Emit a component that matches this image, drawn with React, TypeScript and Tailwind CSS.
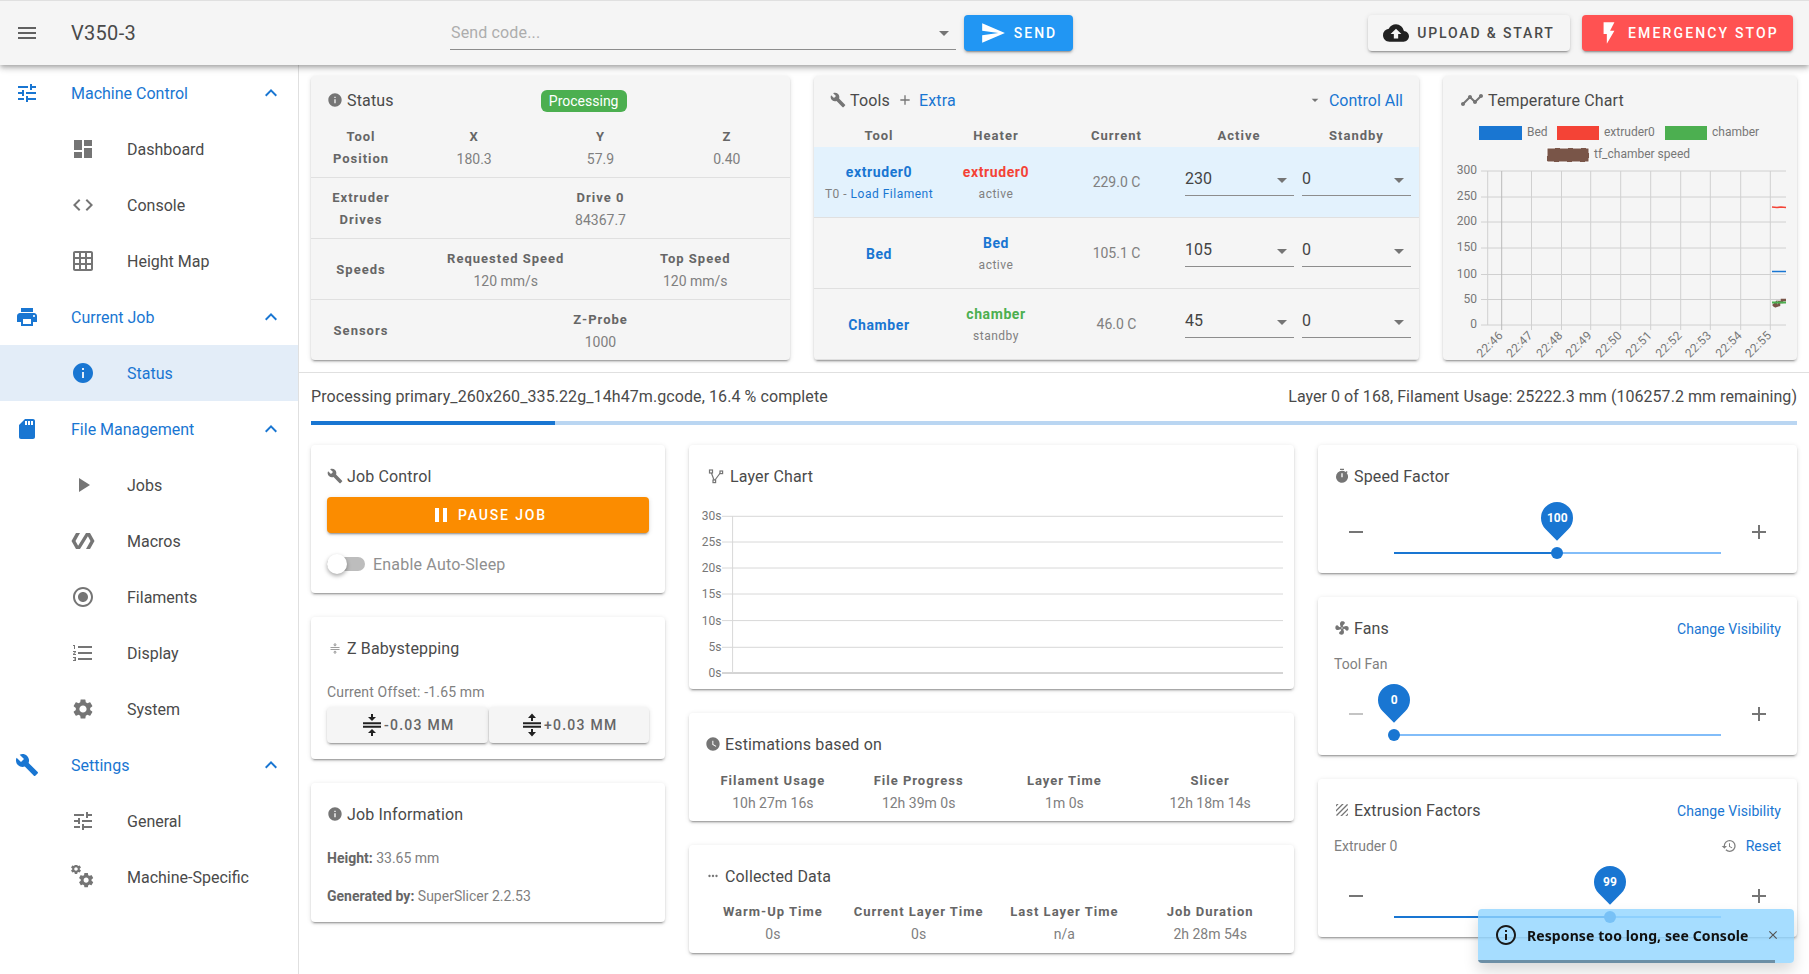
import type { ReactNode } from "react";
import {
  MdAdd,
  MdArrowDropDown,
  MdBuild,
  MdClose,
  MdCloudUpload,
  MdCode,
  MdDashboard,
  MdExpandLess,
  MdFlashOn,
  MdFormatListNumbered,
  MdGridOn,
  MdInfo,
  MdInfoOutline,
  MdMenu,
  MdMoreHoriz,
  MdPause,
  MdPlayArrow,
  MdPolymer,
  MdPrint,
  MdRadioButtonChecked,
  MdRemove,
  MdRestore,
  MdSdCard,
  MdSend,
  MdSettings,
  MdTexture,
  MdTimeline,
  MdTimer,
  MdTune,
  MdWatchLater,
} from "react-icons/md";

const GEAR =
  "M19.43 12.98c.04-.32.07-.64.07-.98s-.03-.66-.07-.98l2.11-1.65c.19-.15.24-.42.12-.64l-2-3.46c-.12-.22-.39-.3-.61-.22l-2.49 1c-.52-.4-1.08-.73-1.69-.98l-.38-2.65C14.46 2.18 14.25 2 14 2h-4c-.25 0-.46.18-.49.42l-.38 2.65c-.61.25-1.17.59-1.69.98l-2.49-1c-.23-.09-.49 0-.61.22l-2 3.46c-.13.22-.07.49.12.64l2.11 1.65c-.04.32-.07.65-.07.98s.03.66.07.98l-2.11 1.65c-.19.15-.24.42-.12.64l2 3.46c.12.22.39.3.61.22l2.49-1c.52.4 1.08.73 1.69.98l.38 2.65c.03.24.24.42.49.42h4c.25 0 .46-.18.49-.42l.38-2.65c.61-.25 1.17-.59 1.69-.98l2.49 1c.23.09.49 0 .61-.22l2-3.46c.12-.22.07-.49-.12-.64l-2.11-1.65zM12 15.5c-1.93 0-3.5-1.57-3.5-3.5s1.57-3.5 3.5-3.5 3.5 1.57 3.5 3.5-1.57 3.5-3.5 3.5z";

const FAN =
  "M12,11A1,1 0 0,0 11,12A1,1 0 0,0 12,13A1,1 0 0,0 13,12A1,1 0 0,0 12,11M12.5,2C17,2 17.11,5.57 14.75,6.75C13.76,7.24 13.32,8.29 13.13,9.22C13.61,9.42 14.03,9.73 14.35,10.13C18.05,8.13 22.03,8.92 22.03,12.5C22.03,17 18.46,17.1 17.28,14.73C16.78,13.74 15.72,13.3 14.79,13.11C14.59,13.59 14.28,14 13.88,14.34C15.87,18.03 15.08,22 11.5,22C7,22 6.91,18.42 9.27,17.24C10.25,16.75 10.69,15.71 10.89,14.79C10.4,14.59 9.97,14.27 9.65,13.87C5.96,15.85 2,15.07 2,11.5C2,7 5.56,6.89 6.74,9.26C7.24,10.25 8.29,10.68 9.22,10.87C9.41,10.39 9.73,9.97 10.14,9.65C8.15,5.96 8.94,2 12.5,2Z";

function CogsIcon() {
  return (
    <svg viewBox="0 0 24 24" className="h-6 w-6 fill-[#757575]">
      <g transform="translate(-1 -2) scale(0.5)">
        <path d={GEAR} />
      </g>
      <g transform="translate(6.5 6.5) scale(0.72)">
        <path d={GEAR} />
      </g>
    </svg>
  );
}

function FanIcon() {
  return (
    <svg viewBox="0 0 24 24" className="h-4 w-4 fill-[#757575]">
      <path d={FAN} />
    </svg>
  );
}

function StepIcon({ out, className }: { out?: boolean; className: string }) {
  return (
    <svg viewBox="0 0 24 24" className={className}>
      <path d="M3 9.2h18v2H3zM3 12.8h18v2H3z" />
      {out ? (
        <path d="M12 0.5 8 5h3v3h2V5h3zM12 23.5 8 19h3v-3h2v3h3z" />
      ) : (
        <path d="M11 1h2v3h3l-4 4L8 4h3zM11 23h2v-3h3l-4-4-4 4h3z" />
      )}
    </svg>
  );
}

function LayerIcon() {
  return (
    <svg viewBox="0 0 16 16" className="ml-[5px] h-4 w-4 shrink-0 fill-none stroke-[#757575] stroke-[1.2]">
      <rect x="1.5" y="2" width="3" height="3" />
      <rect x="12" y="3" width="2.6" height="2.6" />
      <rect x="5" y="12" width="2.6" height="2.6" />
      <path d="M3.4 5 6 12M7 12l5.2-7" />
    </svg>
  );
}

type NavItem = { icon: ReactNode; label: string; active?: boolean };
type NavGroup = { icon: ReactNode; label: string; items: NavItem[] };

const nav: NavGroup[] = [
  {
    icon: <MdTune size={24} />,
    label: "Machine Control",
    items: [
      { icon: <MdDashboard size={24} />, label: "Dashboard" },
      { icon: <MdCode size={24} />, label: "Console" },
      { icon: <MdGridOn size={24} />, label: "Height Map" },
    ],
  },
  {
    icon: <MdPrint size={24} />,
    label: "Current Job",
    items: [{ icon: <MdInfo size={24} />, label: "Status", active: true }],
  },
  {
    icon: <MdSdCard size={24} />,
    label: "File Management",
    items: [
      { icon: <MdPlayArrow size={24} />, label: "Jobs" },
      { icon: <MdPolymer size={24} />, label: "Macros" },
      { icon: <MdRadioButtonChecked size={24} />, label: "Filaments" },
      { icon: <MdFormatListNumbered size={24} />, label: "Display" },
      { icon: <MdSettings size={24} />, label: "System" },
    ],
  },
  {
    icon: <MdBuild size={24} />,
    label: "Settings",
    items: [
      { icon: <MdTune size={24} />, label: "General" },
      { icon: <CogsIcon />, label: "Machine-Specific" },
    ],
  },
];

function Sidebar() {
  return (
    <aside className="w-[299px] shrink-0 border-r border-[#e0e0e0] bg-white">
      {nav.map((group) => (
        <div key={group.label}>
          <div className="flex h-14 items-center pl-[15px] pr-[15px] text-[#1976d2]">
            <span className="flex w-6 justify-center">{group.icon}</span>
            <span className="ml-8 mt-[2px] flex-1 text-base">{group.label}</span>
            <MdExpandLess size={24} />
          </div>
          {group.items.map((item) => (
            <div
              key={item.label}
              className={
                item.active
                  ? "flex h-14 items-center bg-[#e3edf8] pl-[71px] text-[#1976d2]"
                  : "flex h-14 items-center pl-[71px] text-[#4a4a4a]"
              }
            >
              <span className={item.active ? "flex w-6 justify-center" : "flex w-6 justify-center text-[#757575]"}>
                {item.icon}
              </span>
              <span className="ml-8 mt-[2px] text-base">{item.label}</span>
            </div>
          ))}
        </div>
      ))}
    </aside>
  );
}

const btnShadow =
  "shadow-[0_3px_1px_-2px_rgba(0,0,0,0.2),0_2px_2px_0_rgba(0,0,0,0.14),0_1px_5px_0_rgba(0,0,0,0.12)]";

function Header() {
  return (
    <header className="relative z-10 flex h-[65px] shrink-0 items-center border-t border-[#e0e0e0] bg-[#f5f5f5] shadow-[0_2px_4px_-1px_rgba(0,0,0,0.2),0_4px_5px_0_rgba(0,0,0,0.14),0_1px_10px_0_rgba(0,0,0,0.12)]">
      <MdMenu size={24} className="ml-[15px] text-[#616161]" />
      <div className="ml-8 w-[379px] text-xl tracking-[0.3px] text-[#4a4a4a]">V350-3</div>
      <div className="mb-[15px] flex h-[33px] w-[506px] items-center justify-between self-end border-b border-[#8d8d8d] pl-px">
        <span className="text-base tracking-[0.15px] text-[#adadad]">Send code...</span>
        <MdArrowDropDown size={24} className="text-[#757575]" />
      </div>
      <button
        className={`ml-2 flex h-9 w-[109px] items-center justify-center rounded bg-[#2196f3] text-sm font-medium uppercase tracking-[2px] text-white ${btnShadow}`}
      >
        <MdSend size={26} className="mr-2" />
        Send
      </button>
      <button
        className={`ml-[295px] flex h-9 w-[202px] items-center justify-center rounded bg-[#f5f5f5] text-sm font-medium uppercase tracking-[1.85px] text-[#4a4a4a] ${btnShadow}`}
      >
        <MdCloudUpload size={26} className="mr-2 text-[#212121]" />
        Upload &amp; Start
      </button>
      <button
        className={`ml-3 flex h-9 w-[211px] items-center justify-center rounded bg-[#ff5252] text-sm font-medium uppercase tracking-[2.15px] text-white ${btnShadow}`}
      >
        <MdFlashOn size={26} className="mr-[6px]" />
        Emergency Stop
      </button>
    </header>
  );
}

function Title({ icon, children, className }: { icon: ReactNode; children: ReactNode; className?: string }) {
  return (
    <div className={`flex h-6 items-center text-base tracking-[0.15px] text-[#4a4a4a] ${className ?? ""}`}>
      <span className="mr-1 flex w-4 justify-center text-[#757575]">{icon}</span>
      <span className="mt-[2px]">{children}</span>
    </div>
  );
}

const cardShadow =
  "rounded shadow-[0_3px_1px_-2px_rgba(0,0,0,0.2),0_2px_2px_0_rgba(0,0,0,0.14),0_1px_5px_0_rgba(0,0,0,0.12)]";
const headText = "text-[13px] font-bold leading-[22px] tracking-[1px] text-[#666]";
const valueText = "text-sm leading-[22px] text-[#808080]";

function Cell({ label, value }: { label: string; value: string }) {
  return (
    <div className="flex-1 text-center">
      <div className={headText}>{label}</div>
      <div className={valueText}>{value}</div>
    </div>
  );
}

function StatusRow({ label, cells, last }: { label: ReactNode; cells: [string, string][]; last?: boolean }) {
  return (
    <div className={last ? "flex h-[61px] items-center" : "flex h-[61px] items-center border-b border-[#e0e0e0] pt-[2px]"}>
      <div className={`w-[100px] text-center ${headText}`}>{label}</div>
      <div className="flex flex-1">
        {cells.map(([l, v]) => (
          <Cell key={l} label={l} value={v} />
        ))}
      </div>
    </div>
  );
}

function StatusCard() {
  return (
    <section className={`w-[479px] shrink-0 bg-[#f5f5f5] ${cardShadow}`}>
      <div className="flex h-[41px] items-start pt-3">
        <Title icon={<MdInfo size={16} />} className="ml-4">
          Status
        </Title>
        <span className="ml-[147px] mt-[2px] flex h-[22px] w-[86px] items-center justify-center rounded-md bg-[#4caf50] text-sm text-white">
          Processing
        </span>
      </div>
      <StatusRow label={<>Tool<br />Position</>} cells={[["X", "180.3"], ["Y", "57.9"], ["Z", "0.40"]]} />
      <StatusRow label={<>Extruder<br />Drives</>} cells={[["Drive 0", "84367.7"]]} />
      <StatusRow label="Speeds" cells={[["Requested Speed", "120 mm/s"], ["Top Speed", "120 mm/s"]]} />
      <StatusRow label="Sensors" cells={[["Z-Probe", "1000"]]} last />
    </section>
  );
}

const toolCols = "grid grid-cols-[130px_104px_137px_117px_109px]";

function SelectBox({ value }: { value: string }) {
  return (
    <div className="mb-[3px] flex h-[31px] items-center justify-between border-b border-[#8d8d8d] text-base text-[#444]">
      <span className="-mt-[2px]">{value}</span>
      <MdArrowDropDown size={24} className="text-[#757575]" />
    </div>
  );
}

function ToolRow({
  tool,
  sub,
  heater,
  heaterClass,
  state,
  current,
  active,
  highlight,
}: {
  tool: string;
  sub?: ReactNode;
  heater: string;
  heaterClass: string;
  state: string;
  current: string;
  active: string;
  highlight?: boolean;
}) {
  return (
    <div className={`${toolCols} h-[71px] items-center border-b border-[#e0e0e0] ${highlight ? "bg-[#e3f2fd]" : ""}`}>
      <div className="pt-px text-center">
        <div className="text-sm font-bold leading-[22px] tracking-[0.6px] text-[#1976d2]">{tool}</div>
        {sub}
      </div>
      <div className="pt-px text-center">
        <div className={`text-sm font-bold leading-[22px] tracking-[0.6px] ${heaterClass}`}>{heater}</div>
        <div className="text-xs leading-[22px] tracking-[0.5px] text-[#808080]">{state}</div>
      </div>
      <div className="text-center text-sm text-[#808080]">{current}</div>
      <div className="pr-2">
        <SelectBox value={active} />
      </div>
      <SelectBox value="0" />
    </div>
  );
}

function ToolsCard() {
  return (
    <section className={`w-[605px] shrink-0 overflow-hidden bg-[#f5f5f5] ${cardShadow}`}>
      <div className="flex h-[49px] items-start justify-between pr-4 pt-3">
        <div className="flex h-6 items-center">
          <Title icon={<MdBuild size={16} />} className="ml-4">
            Tools
          </Title>
          <MdAdd size={16} className="ml-[7px] text-[#757575]" />
          <span className="ml-[6px] mt-[2px] text-base tracking-[0.15px] text-[#1976d2]">Extra</span>
        </div>
        <div className="flex h-6 items-center text-base text-[#1976d2]">
          <MdArrowDropDown size={16} className="mr-[6px] text-[#757575]" />
          <span className="mt-[2px]">Control All</span>
        </div>
      </div>
      <div className={`${toolCols} h-[22px] ${headText}`}>
        <div className="text-center">Tool</div>
        <div className="text-center">Heater</div>
        <div className="text-center">Current</div>
        <div className="pr-[9px] text-center">Active</div>
        <div className="text-center">Standby</div>
      </div>
      <ToolRow
        highlight
        tool="extruder0"
        sub={
          <div className="text-xs leading-[22px] tracking-[0.5px] text-[#808080]">
            T0 - <span className="text-[#1976d2]">Load Filament</span>
          </div>
        }
        heater="extruder0"
        heaterClass="text-[#f44336]"
        state="active"
        current="229.0 C"
        active="230"
      />
      <ToolRow tool="Bed" heater="Bed" heaterClass="text-[#1976d2]" state="active" current="105.1 C" active="105" />
      <ToolRow tool="Chamber" heater="chamber" heaterClass="text-[#4caf50]" state="standby" current="46.0 C" active="45" />
    </section>
  );
}

function TempChart() {
  const ys = [55, 81, 106, 132, 158.5, 183.5, 209];
  const labels = ["300", "250", "200", "150", "100", "50", "0"];
  const xs = [58.7, 88.5, 118.5, 147.7, 177.7, 207.7, 237.7, 267.3, 297.7, 327.3];
  const times = ["22:46", "22:47", "22:48", "22:49", "22:50", "22:51", "22:52", "22:53", "22:54", "22:55"];
  return (
    <svg width="354" height="244" className="block overflow-visible text-[12px]">
      <rect x="36" y="10" width="43" height="14" fill="#1976d2" />
      <text x="84" y="20" fill="#777">Bed</text>
      <rect x="114" y="10" width="42" height="14" fill="#f44336" />
      <text x="161" y="20" fill="#777">extruder0</text>
      <rect x="222" y="10" width="42" height="14" fill="#4caf50" />
      <text x="269" y="20" fill="#777">chamber</text>
      <rect x="104" y="32" width="42" height="14" fill="#795548" stroke="#fff" strokeWidth="1" strokeDasharray="8 5" />
      <text x="151" y="42" fill="#777">tf_chamber speed</text>
      {ys.map((y, i) => (
        <g key={labels[i]}>
          <path d={`M38 ${y}H343`} stroke="#d0d0d0" />
          <text x="34" y={y + 3} textAnchor="end" fill="#777">{labels[i]}</text>
        </g>
      ))}
      <path d="M44.7 55V209" stroke="#d0d0d0" />
      {xs.map((x, i) => (
        <g key={times[i]}>
          <path d={`M${x} 55V214`} stroke={i === 0 ? "#bbb" : "#d0d0d0"} />
          <text
            x={x + 2}
            y={220}
            textAnchor="end"
            fill="#777"
            letterSpacing="0.3"
            transform={`rotate(-45 ${x + 2} 220)`}
          >
            {times[i]}
          </text>
        </g>
      ))}
      <path d="M329 91l5 .5 4-.5 5 .5" stroke="#f44336" strokeWidth="1.5" fill="none" />
      <path d="M329 155.5H343" stroke="#1976d2" strokeWidth="1.5" fill="none" />
      <path d="M330 190l3-3 0 3 3-1 0-3 3 0 0-2 4 0" stroke="#795548" strokeWidth="2.5" fill="none" />
      <path d="M329 186.5H343" stroke="#4caf50" strokeWidth="2" fill="none" />
    </svg>
  );
}

function TempCard() {
  return (
    <section className={`flex-1 bg-[#f5f5f5] ${cardShadow}`}>
      <div className="pt-3">
        <div className="flex h-6 items-center pl-[17px] text-base tracking-[0.15px] text-[#4a4a4a]">
          <MdTimeline size={24} className="mr-1 text-[#757575]" />
          <span className="mt-[2px]">Temperature Chart</span>
        </div>
      </div>
      <div className="mt-1">
        <TempChart />
      </div>
    </section>
  );
}

function LayerChart() {
  const ys = [10.3, 36, 62, 88, 114.6, 141.3, 167];
  const labels = ["30s", "25s", "20s", "15s", "10s", "5s", "0s"];
  return (
    <svg width="604" height="190" className="mt-[18px] block text-[12px]">
      {ys.map((y, i) => (
        <g key={labels[i]}>
          <path d={`M33 ${y}H594`} stroke={i === 6 ? "#aaa" : "#d8d8d8"} />
          <text x="32.5" y={y + 4} textAnchor="end" fill="#777">{labels[i]}</text>
        </g>
      ))}
      <path d="M43.6 10V167" stroke="#d8d8d8" />
    </svg>
  );
}

function Card({ className, children }: { className?: string; children: ReactNode }) {
  return <section className={`bg-white pt-[19px] ${cardShadow} ${className ?? ""}`}>{children}</section>;
}

function StatGrid({ rows, className }: { rows: [string, string][]; className: string }) {
  return (
    <div className={`grid grid-cols-4 px-[11px] ${className}`}>
      {rows.map(([l, v]) => (
        <div key={l} className="text-center">
          <div className={headText}>{l}</div>
          <div className={valueText}>{v}</div>
        </div>
      ))}
    </div>
  );
}

function FactorRow({ value, percent, dim }: { value: string; percent: number; dim?: boolean }) {
  return (
    <div className="flex h-[53px] items-start pl-[26px]">
      <MdRemove size={24} className={dim ? "text-[#c4c4c4]" : "text-[#757575]"} />
      <div className="relative ml-[26px] h-[53px] w-[327px]">
        <div className="absolute left-0 right-0 top-[32px] h-[2px] bg-[#82bdf9]" />
        <div className="absolute left-0 top-[32px] h-[2px] bg-[#1976d2]" style={{ width: `${percent}%` }} />
        <div
          className="absolute top-[27px] h-3 w-3 -translate-x-1/2 rounded-full bg-[#1976d2]"
          style={{ left: `${percent}%` }}
        />
        <div
          className="absolute -top-[18px] flex h-8 w-8 -translate-x-1/2 rotate-45 items-center justify-center rounded-full rounded-br-none bg-[#1976d2]"
          style={{ left: `${percent}%` }}
        >
          <span className="-rotate-45 text-xs font-bold text-white">{value}</span>
        </div>
      </div>
      <MdAdd size={24} className="ml-[26px] text-[#757575]" />
    </div>
  );
}

function VisibilityLink() {
  return <span className="mt-[2px] text-sm tracking-[0.05px] text-[#1976d2]">Change Visibility</span>;
}

function Toast() {
  return (
    <div className="fixed bottom-[11px] right-[15px] z-20 flex h-[54px] w-[316px] items-center overflow-hidden rounded bg-[#90d5ff]/80 pb-[2px] pl-[16px] shadow-[0_8px_15px_rgba(0,0,0,0.15)]">
      <MdInfoOutline size={24} className="text-[#1a1a1a]" />
      <span className="ml-[9px] [font-family:'Noto_Sans',sans-serif] text-[14px] font-bold tracking-[0.1px] text-[#111]">
        Response too long, see Console
      </span>
      <MdClose size={14} className="ml-auto mr-[14px] text-[#555]" />
      <div className="absolute bottom-0 left-0 h-[3px] w-[94%] bg-black/35" />
    </div>
  );
}

export default function App() {
  return (
    <div className="flex h-[974px] flex-col overflow-hidden bg-white [font-family:Roboto,sans-serif]">
      <Header />
      <div className="flex min-h-0 flex-1">
        <Sidebar />
        <main className="min-w-0 flex-1">
          <div className="flex gap-6 px-3 pt-[11px]">
            <div className="flex h-[284px] w-full gap-6">
              <StatusCard />
              <ToolsCard />
              <TempCard />
            </div>
          </div>
          <div className="mt-3 border-t border-[#e0e0e0] px-3 pt-[14px]">
            <div className="flex justify-between text-base leading-5 text-[#4a4a4a]">
              <span className="tracking-[0.09px]">Processing primary_260x260_335.22g_14h47m.gcode, 16.4 % complete</span>
              <span className="tracking-[0.04px]">Layer 0 of 168, Filament Usage: 25222.3 mm (106257.2 mm remaining)</span>
            </div>
            <div className="mt-[14px] h-1 bg-[#bad6f2]">
              <div className="h-1 bg-[#1976d2]" style={{ width: "16.4%" }} />
            </div>
            <div className="mt-5 grid grid-cols-[354px_605px_479px] gap-6">
              <div className="flex flex-col gap-6">
                <Card className="pb-[17px]">
                  <Title icon={<MdBuild size={16} />} className="ml-4">
                    Job Control
                  </Title>
                  <button
                    className={`mx-4 mt-[9px] flex h-9 w-[322px] items-center justify-center rounded bg-[#fb8c00] text-sm font-medium uppercase tracking-[1.85px] text-white ${btnShadow}`}
                  >
                    <MdPause size={24} className="mr-[5px]" />
                    Pause Job
                  </button>
                  <div className="mt-[19px] flex h-6 items-center pl-4">
                    <div className="relative h-[14px] w-[38px] rounded-full bg-[#bdbdbd]">
                      <div className="absolute -top-[3px] left-0 h-5 w-5 rounded-full bg-white shadow-[0_2px_4px_rgba(0,0,0,0.35)]" />
                    </div>
                    <span className="ml-2 mt-[2px] text-base tracking-[0.2px] text-[#8f8f8f]">Enable Auto-Sleep</span>
                  </div>
                </Card>
                <Card className="pb-4">
                  <Title icon={<StepIcon className="h-[15px] w-3 fill-[#9e9e9e]" />} className="ml-4">
                    Z Babystepping
                  </Title>
                  <div className="ml-4 mt-[22px] text-sm leading-5 tracking-[0.15px] text-[#808080]">
                    Current Offset: -1.65 mm
                  </div>
                  <div className="mx-4 mt-[5px] flex gap-px">
                    <button
                      className={`flex h-9 flex-1 items-center justify-center rounded bg-[#f5f5f5] text-sm font-medium tracking-[1.25px] text-[#666] ${btnShadow}`}
                    >
                      <StepIcon className="h-6 w-6 fill-[#212121]" />
                      -0.03 MM
                    </button>
                    <button
                      className={`flex h-9 flex-1 items-center justify-center rounded bg-[#f5f5f5] text-sm font-medium tracking-[1.25px] text-[#666] ${btnShadow}`}
                    >
                      <StepIcon out className="h-6 w-6 fill-[#212121]" />
                      +0.03 MM
                    </button>
                  </div>
                </Card>
                <Card className="pb-4">
                  <Title icon={<MdInfo size={16} />} className="ml-4">
                    Job Information
                  </Title>
                  <div className="ml-4 mt-[22px] text-sm leading-5 text-[#808080]">
                    <b className="font-bold text-[#666]">Height:</b> 33.65 mm
                  </div>
                  <div className="ml-4 mt-[18px] text-sm leading-5 text-[#808080]">
                    <b className="font-bold text-[#666]">Generated by:</b> SuperSlicer 2.2.53
                  </div>
                </Card>
              </div>
              <div className="flex flex-col gap-6">
                <Card className="h-[244px]">
                  <Title icon={<LayerIcon />} className="ml-4">
                    <span className="ml-[5px]">Layer Chart</span>
                  </Title>
                  <LayerChart />
                </Card>
                <Card>
                  <Title icon={<MdWatchLater size={16} />} className="ml-4">
                    Estimations based on
                  </Title>
                  <StatGrid
                    className="mt-[14px] pb-[7px]"
                    rows={[
                      ["Filament Usage", "10h 27m 16s"],
                      ["File Progress", "12h 39m 0s"],
                      ["Layer Time", "1m 0s"],
                      ["Slicer", "12h 18m 14s"],
                    ]}
                  />
                </Card>
                <Card>
                  <Title icon={<MdMoreHoriz size={14} />} className="ml-4">
                    Collected Data
                  </Title>
                  <StatGrid
                    className="mt-[13px] pb-2"
                    rows={[
                      ["Warm-Up Time", "0s"],
                      ["Current Layer Time", "0s"],
                      ["Last Layer Time", "n/a"],
                      ["Job Duration", "2h 28m 54s"],
                    ]}
                  />
                </Card>
              </div>
              <div className="flex flex-col gap-6">
                <Card>
                  <Title icon={<MdTimer size={16} />} className="ml-4">
                    Speed Factor
                  </Title>
                  <div className="mt-8">
                    <FactorRow value="100" percent={49.8} />
                  </div>
                </Card>
                <Card>
                  <div className="flex h-6 items-center justify-between pr-4">
                    <Title icon={<FanIcon />} className="ml-4">
                      Fans
                    </Title>
                    <VisibilityLink />
                  </div>
                  <div className="ml-4 mt-[14px] text-sm leading-5 text-[#808080]">Tool Fan</div>
                  <div className="mt-7">
                    <FactorRow value="0" percent={0} dim />
                  </div>
                </Card>
                <Card>
                  <div className="flex h-6 items-center justify-between pr-4">
                    <Title icon={<MdTexture size={16} />} className="ml-4">
                      Extrusion Factors
                    </Title>
                    <VisibilityLink />
                  </div>
                  <div className="mt-[14px] flex items-center justify-between pl-4 pr-4 text-sm leading-5 text-[#808080]">
                    Extruder 0
                    <span className="flex items-center">
                      <MdRestore size={16} className="mr-[9px]" />
                      <span className="text-[#1976d2]">Reset</span>
                    </span>
                  </div>
                  <div className="mt-7">
                    <FactorRow value="99" percent={66} />
                  </div>
                </Card>
              </div>
            </div>
          </div>
        </main>
      </div>
      <Toast />
    </div>
  );
}
